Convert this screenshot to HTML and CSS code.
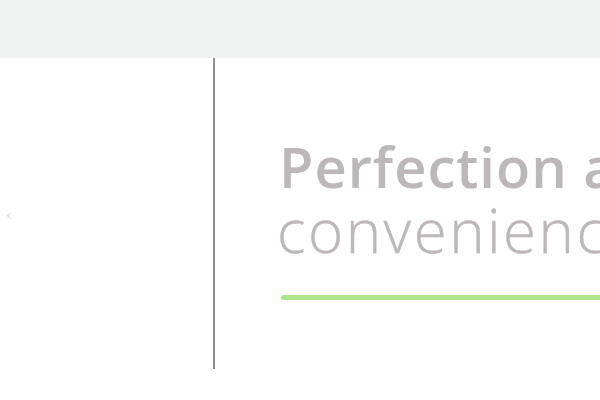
FILE: index.html
```html
<!DOCTYPE html>
<html>
<head>
<meta charset="utf-8">
<link rel="stylesheet" href="styles.css">
</head>
<body>
<header class="topbar"></header>
<main class="main">
  <aside class="side">
    <span class="chev">‹</span>
  </aside>
  <section class="hero">
    <h1 class="title"><span class="bold">Perfection and</span><span class="light">convenience</span></h1>
    <div class="rule"></div>
  </section>
</main>
</body>
</html>
```
FILE: styles.css
```css
html, body {
  margin: 0;
  padding: 0;
  background: #ffffff;
  overflow: hidden;
  width: 600px;
  height: 400px;
}
.topbar {
  height: 58px;
  background: #eff0f0;
}
.main {
  display: flex;
  height: 311px;
}
.side {
  border-right: 2px solid #8f8f8f;
  display: flex;
  align-items: center;
  padding-left: 6px;
  box-sizing: border-box;
  width: 215px;
}
.chev {
  font-family: "DejaVu Sans", sans-serif;
  font-size: 14px;
  color: #d8d8d8;
  margin-top: 2px;
}
.hero {
  flex: 1;
  padding-left: 64px;
  padding-top: 76px;
  white-space: nowrap;
  overflow: hidden;
}
.title {
  margin: 0;
  color: #bcb8b9;
  font-family: "Open Sans", sans-serif;
  font-size: 56px;
}
.bold, .light {
  display: block;
}
.bold {
  font-weight: 600;
  letter-spacing: 1px;
  line-height: 64px;
}
.light {
  font-weight: 300;
  font-size: 60px;
  line-height: 64px;
  letter-spacing: 2.5px;
  margin-left: -2px;
  -webkit-text-stroke: 0.4px #bcb8b9;
}
.rule {
  margin-top: 33px;
  margin-left: 2px;
  height: 5px;
  border-radius: 3px;
  background: #aee58d;
  width: 400px;
}
```
